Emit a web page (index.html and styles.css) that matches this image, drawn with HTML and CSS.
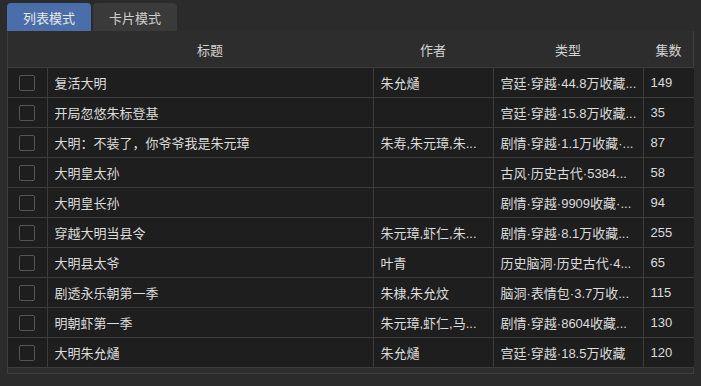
FILE: index.html
```html
<!DOCTYPE html>
<html lang="zh-CN">

<head>
    <meta charset="UTF-8">
    <meta name="viewport" content="width=device-width, initial-scale=1.0">
    <title>剧集列表</title>
    <link rel="stylesheet" href="styles.css">
</head>

<body>
    <div class="tabs">
        <button class="tab active">列表模式</button>
        <button class="tab">卡片模式</button>
    </div>

    <div class="panel">
        <table class="list">
            <colgroup>
                <col class="col-check">
                <col class="col-title">
                <col class="col-author">
                <col class="col-type">
                <col class="col-count">
            </colgroup>
            <thead>
                <tr>
                    <th></th>
                    <th>标题</th>
                    <th>作者</th>
                    <th>类型</th>
                    <th>集数</th>
                </tr>
            </thead>
            <tbody>
                <tr>
                    <td class="check"><span class="box"></span></td>
                    <td>复活大明</td>
                    <td>朱允熥</td>
                    <td>宫廷·穿越·44.8万收藏...</td>
                    <td>149</td>
                </tr>
                <tr>
                    <td class="check"><span class="box"></span></td>
                    <td>开局忽悠朱标登基</td>
                    <td></td>
                    <td>宫廷·穿越·15.8万收藏...</td>
                    <td>35</td>
                </tr>
                <tr>
                    <td class="check"><span class="box"></span></td>
                    <td>大明：不装了，你爷爷我是朱元璋</td>
                    <td>朱寿,朱元璋,朱...</td>
                    <td>剧情·穿越·1.1万收藏·...</td>
                    <td>87</td>
                </tr>
                <tr>
                    <td class="check"><span class="box"></span></td>
                    <td>大明皇太孙</td>
                    <td></td>
                    <td>古风·历史古代·5384...</td>
                    <td>58</td>
                </tr>
                <tr>
                    <td class="check"><span class="box"></span></td>
                    <td>大明皇长孙</td>
                    <td></td>
                    <td>剧情·穿越·9909收藏·...</td>
                    <td>94</td>
                </tr>
                <tr>
                    <td class="check"><span class="box"></span></td>
                    <td>穿越大明当县令</td>
                    <td>朱元璋,虾仁,朱...</td>
                    <td>剧情·穿越·8.1万收藏...</td>
                    <td>255</td>
                </tr>
                <tr>
                    <td class="check"><span class="box"></span></td>
                    <td>大明县太爷</td>
                    <td>叶青</td>
                    <td>历史脑洞·历史古代·4...</td>
                    <td>65</td>
                </tr>
                <tr>
                    <td class="check"><span class="box"></span></td>
                    <td>剧透永乐朝第一季</td>
                    <td>朱棣,朱允炆</td>
                    <td>脑洞·表情包·3.7万收...</td>
                    <td>115</td>
                </tr>
                <tr>
                    <td class="check"><span class="box"></span></td>
                    <td>明朝虾第一季</td>
                    <td>朱元璋,虾仁,马...</td>
                    <td>剧情·穿越·8604收藏...</td>
                    <td>130</td>
                </tr>
                <tr>
                    <td class="check"><span class="box"></span></td>
                    <td>大明朱允熥</td>
                    <td>朱允熥</td>
                    <td>宫廷·穿越·18.5万收藏</td>
                    <td>120</td>
                </tr>
            </tbody>
        </table>
    </div>
</body>

</html>
```

FILE: styles.css
```css
body {
    margin: 0;
    padding: 3px 7px 0 7px;
    background-color: #2b2b2b;
    font-family: "Liberation Sans", "Noto Sans CJK SC", sans-serif;
    font-size: 13px;
    color: #dcdcdc;
    height: 386px;
    box-sizing: border-box;
}

.tabs {
    display: flex;
    gap: 2px;
    height: 28px;
}

.tab {
    width: 84px;
    height: 28px;
    border: none;
    border-radius: 4px 4px 0 0;
    background-color: #3a3a3a;
    color: #d0d0d0;
    font-family: inherit;
    font-size: 13px;
    padding: 0;
}

.tab.active {
    background-color: #4a6ea9;
    color: #e8e8e8;
}

.panel {
    width: 687px;
    height: 343px;
    box-sizing: border-box;
    border: 1px solid #3d3d3d;
    border-top: none;
    background-color: #2d2d2d;
}

.list {
    width: 686px;
    border-collapse: collapse;
    table-layout: fixed;
}

.col-check {
    width: 39px;
}

.col-title {
    width: 326px;
}

.col-author {
    width: 120px;
}

.col-type {
    width: 150px;
}

.col-count {
    width: 51px;
}

.list th {
    height: 36px;
    padding: 0;
    font-weight: normal;
    text-align: center;
    color: #d4d4d4;
    border-bottom: 1px solid #3d3d3d;
}

.list td {
    height: 29px;
    padding: 0 7px;
    background-color: #1e1e1e;
    border: 1px solid #3d3d3d;
    border-top: none;
    white-space: nowrap;
    overflow: hidden;
}

.list td:first-child {
    border-left: none;
}

.list td:last-child {
    border-right: none;
}

.list td.check {
    padding: 0;
    text-align: center;
}

.box {
    display: inline-block;
    width: 14px;
    height: 14px;
    border: 1px solid #555;
    border-radius: 2px;
    vertical-align: middle;
}
```
